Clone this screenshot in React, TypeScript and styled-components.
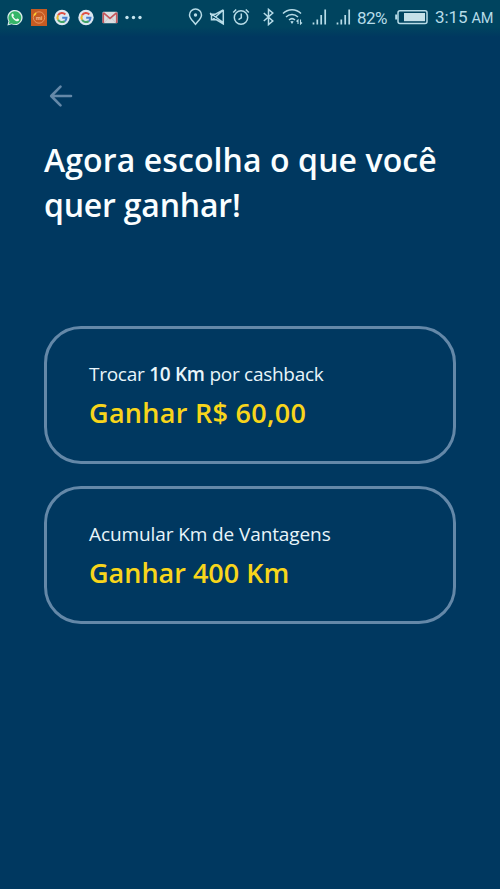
import React from "react";
import styled, { createGlobalStyle } from "styled-components";

const GlobalStyle = createGlobalStyle`
  * {
    box-sizing: border-box;
  }
  body {
    margin: 0;
    background-color: #003860;
  }
`;

const App = () => {
  return (
    <Screen>
      <GlobalStyle />
      <StatusBar />
      <Content>
        <BackButton aria-label="Voltar">
          <svg width="24" height="24" viewBox="0 0 24 24">
            <path d="M22 12H2.5M11.5 2.7L2.2 12l9.3 9.3" />
          </svg>
        </BackButton>
        <Title>
          <TitleLine $spacing={0.1}>Agora escolha o que você</TitleLine>
          <TitleLine $spacing={-0.2}>quer ganhar!</TitleLine>
        </Title>
        <Options>
          <Option>
            <Label $spacing={-0.27}>
              Trocar <b>10 Km</b> por cashback
            </Label>
            <Reward $spacing={0.3}>Ganhar R$ 60,00</Reward>
          </Option>
          <Option>
            <Label $spacing={-0.1}>Acumular Km de Vantagens</Label>
            <Reward $spacing={0}>Ganhar 400 Km</Reward>
          </Option>
        </Options>
      </Content>
    </Screen>
  );
};

export default App;

const StatusBar = () => {
  return (
    <Bar>
      <Notifications>
        <svg width="16" height="17" viewBox="0 0 16 17">
          <path d="M.4 16.5l1-4.2A7.6 7.6 0 1 1 4.6 15.3z" fill="#dcefed" />
          <path d="M1.8 15.1l.7-2.8a6.4 6.4 0 1 1 2.3 2.1z" fill="#35b568" />
          <path
            d="M5.4 4.500c-1.500.8-1.300 3 .9 5.400 2.200 2.300 4.700 3 5.600 1.500.4-.8.2-1.100-1.400-1.800-.7-.3-.8.9-1.500.7C7.800 9.800 6.700 8.700 6.300 7.600 6.300 7 7.200 6.800 6.900 6.100 6.300 4.500 6.100 4.200 5.400 4.500z"
            fill="#f1fbf5"
          />
        </svg>
        <svg width="16" height="17" viewBox="0 0 16 17">
          <rect width="16" height="17" fill="#c65b22" />
          <circle cx="8" cy="8.5" r="5.7" fill="none" stroke="#eda26d" strokeWidth=".8" />
          <path d="M3 6.5l2-2.600" stroke="#ffd22e" strokeWidth="1.6" />
          <text x="8" y="10.5" fontSize="5.5" fontWeight="700" textAnchor="middle" fill="#f4bc92" fontFamily="Roboto, sans-serif">
            mi
          </text>
        </svg>
        <GoogleIcon />
        <GoogleIcon />
        <svg width="16" height="17" viewBox="0 0 16 17">
          <rect x=".5" y="2.7" width="15" height="11.6" rx="1" fill="#dcdde0" />
          <path d="M2 14l4.500-5M14 14L9.500 9" fill="none" stroke="#b9babf" strokeWidth=".6" />
          <path d="M1.300 14V4M14.700 14V4M1.300 3.700l6.700 5.700 6.700-5.700" fill="none" stroke="#c6565b" strokeWidth="1.6" />
        </svg>
        <svg width="17" height="17" viewBox="0 0 17 17" fill="#c5e4ee">
          <circle cx="2" cy="8.5" r="1.7" />
          <circle cx="8.5" cy="8.5" r="1.7" />
          <circle cx="15" cy="8.5" r="1.7" />
        </svg>
      </Notifications>
      <System>
        <LineIcon width="15" height="18" viewBox="0 0 15 18">
          <path d="M7.500 16.300C4.300 12.300 1.500 9.900 1.500 6.900a6 6 0 0 1 12 0c0 3-2.800 5.400-6 9.400z" />
          <circle cx="7.5" cy="7" r="1.7" fill="#b7dce8" stroke="none" />
        </LineIcon>
        <LineIcon width="17" height="18" viewBox="0 0 17 18" $left={6}>
          <path d="M14.300 1.800v14.200L7.500 11.800H2.500V6.500M14.300 1.800L6 6.300H1M1 5l13.300 9.500M3.500 11.800L14.300 2" />
        </LineIcon>
        <LineIcon width="18" height="18" viewBox="0 0 18 18" $left={6.5}>
          <circle cx="9" cy="9.5" r="6.7" />
          <path d="M9.300 5.500v4.300l-2.800 1.800M1.200 4.500l3-3M13.800 1.500l3 3" />
        </LineIcon>
        <LineIcon width="13" height="18" viewBox="0 0 13 18" $left={12}>
          <path d="M1.800 5l9 8-4.300 3.600V1.400L10.800 5l-9 8" />
        </LineIcon>
        <LineIcon width="22" height="18" viewBox="0 0 22 18" $left={6.5}>
          <path d="M1 5.500c5-5 13-5 18 0M4 9c3.500-3.400 8.500-3.400 12 0M7 12c2-1.800 4-1.800 6 0" />
          <path d="M8.300 13.500L10 16l1.700-2.500c-1-.8-2.400-.8-3.400 0z" fill="#b7dce8" stroke="none" />
          <path d="M16 16v-4l-1.500 1.500M18.500 11.500V16l1.500-1.500" strokeWidth="1.1" />
        </LineIcon>
        <SignalIcon left={8.5} />
        <SignalIcon left={9} />
        <Battery>82%</Battery>
        <LineIcon width="33" height="18" viewBox="0 0 33 18" $left={6.5}>
          <rect x="3" y="2.8" width="29" height="12.6" rx="2" />
          <path d="M1.200 6.500v5" strokeWidth="2" />
          <rect x="9" y="5" width="21" height="8.2" fill="#c5e1e9" stroke="none" />
        </LineIcon>
        <Clock>
          3:15 <small>AM</small>
        </Clock>
      </System>
    </Bar>
  );
};

const GoogleIcon = () => (
  <svg width="16" height="17" viewBox="0 0 16 17">
    <circle cx="8" cy="8.5" r="7.7" fill="#dce7f1" />
    <g fill="none" strokeWidth="2">
      <path d="M11.300 5.500A4.500 4.500 0 0 0 4.100 6.300" stroke="#df5146" />
      <path d="M4.100 6.300a4.500 4.500 0 0 0 0 4.500" stroke="#edb629" />
      <path d="M4.100 10.800a4.500 4.500 0 0 0 6.700 1.300" stroke="#43a568" />
      <path d="M10.800 12.100A4.500 4.500 0 0 0 12.500 8.700H8.200" stroke="#477fd0" />
    </g>
  </svg>
);

const SignalIcon = ({ left }: { left: number }) => (
  <LineIcon width="15" height="18" viewBox="0 0 15 18" $left={left}>
    <path d="M1.500 14.500v2M5.300 11.500v5M9.200 7v9.500M13.200 1.500v15" strokeWidth="1.7" />
  </LineIcon>
);

const Screen = styled.div`
  width: 100%;
  height: 889px;
  background-color: #003860;
  font-family: "Open Sans", "Noto Sans", sans-serif;
  overflow: hidden;
`;

const Bar = styled.header`
  display: flex;
  align-items: center;
  justify-content: space-between;
  height: 37px;
  padding: 0 6px 3px 7px;
  background: linear-gradient(#00445f 0, #00445f 27px, #003860 37px);
  svg {
    display: block;
    flex: none;
  }
`;

const Notifications = styled.div`
  display: flex;
  align-items: center;
  gap: 7.7px;
`;

const System = styled.div`
  display: flex;
  align-items: center;
  color: #b7dce8;
  font-family: Roboto, sans-serif;
  white-space: nowrap;
`;

const LineIcon = styled.svg<{ $left?: number }>`
  margin-left: ${({ $left }) => $left || 0}px;
  fill: none;
  stroke: #b7dce8;
  stroke-width: 1.5;
`;

const Battery = styled.span`
  width: 31px;
  margin: 2px 0 0 6px;
  font-size: 17px;
  line-height: 20px;
  letter-spacing: -0.6px;
`;

const Clock = styled.time`
  width: 59px;
  margin: 2px 0 0 7.5px;
  font-size: 17px;
  line-height: 20px;
  letter-spacing: -0.1px;
  small {
    font-size: 14.5px;
  }
`;

const Content = styled.main`
  padding: 47px 44px 0;
`;

const BackButton = styled.button`
  display: block;
  width: 24px;
  height: 24px;
  margin-left: 5px;
  padding: 0;
  border: 0;
  background: none;
  svg {
    display: block;
    fill: none;
    stroke: #6488a8;
    stroke-width: 2.6;
    stroke-linecap: round;
    stroke-linejoin: round;
  }
`;

const Title = styled.h1`
  margin: 29px 0 0;
  color: #fafeff;
  font-size: 32px;
  font-weight: 600;
  line-height: 45px;
  white-space: nowrap;
`;

const TitleLine = styled.span<{ $spacing: number }>`
  display: block;
  letter-spacing: ${({ $spacing }) => $spacing}px;
`;

const Options = styled.div`
  display: flex;
  flex-direction: column;
  gap: 22px;
  margin-top: 99px;
`;

const Option = styled.section`
  height: 138px;
  padding: 32px 42px;
  border: 3px solid #6488a8;
  border-radius: 37px;
  white-space: nowrap;
`;

const Label = styled.p<{ $spacing: number }>`
  margin: 0;
  color: #e8f5fa;
  font-size: 19px;
  line-height: 27px;
  letter-spacing: ${({ $spacing }) => $spacing}px;
  b {
    font-weight: 600;
  }
`;

const Reward = styled.p<{ $spacing: number }>`
  margin: 6px 0 0;
  color: #f8d51b;
  font-size: 27px;
  font-weight: 600;
  line-height: 38px;
  letter-spacing: ${({ $spacing }) => $spacing}px;
`;
